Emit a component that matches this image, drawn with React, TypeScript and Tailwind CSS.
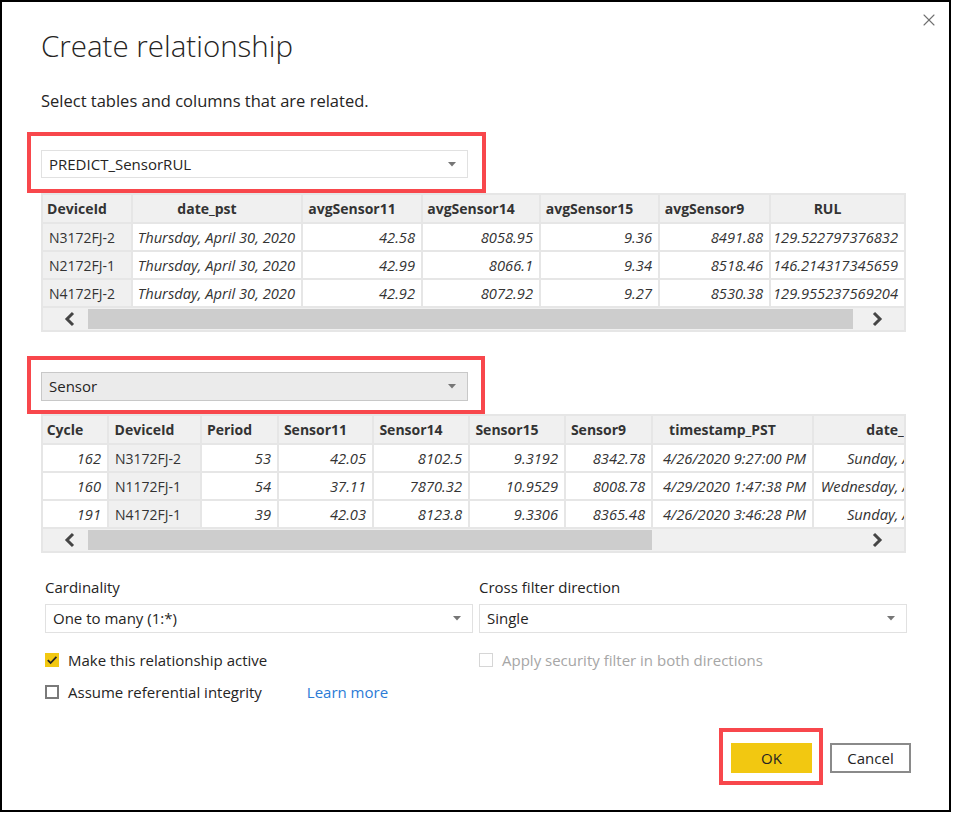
import React from 'react';
import { X } from 'lucide-react';

const headCell = 'bg-[#f0f0f0] h-[27px] flex items-center justify-center pr-5 font-bold text-[14px] text-[#333] whitespace-nowrap overflow-hidden';
const keyCell = 'bg-[#f0f0f0] h-[26px] flex items-center pl-[6px] text-[14px] text-[#333] whitespace-nowrap overflow-hidden';
const valCell = 'bg-white h-[26px] flex items-center justify-end pr-[6px] italic text-[14.7px] text-[#333] whitespace-nowrap overflow-hidden';

const t1Head = ['DeviceId', 'date_pst', 'avgSensor11', 'avgSensor14', 'avgSensor15', 'avgSensor9', 'RUL'];
const t1Rows = [
  ['N3172FJ-2', 'Thursday, April 30, 2020', '42.58', '8058.95', '9.36', '8491.88', '129.522797376832'],
  ['N2172FJ-1', 'Thursday, April 30, 2020', '42.99', '8066.1', '9.34', '8518.46', '146.214317345659'],
  ['N4172FJ-2', 'Thursday, April 30, 2020', '42.92', '8072.92', '9.27', '8530.38', '129.955237569204'],
];

const t2Head = ['Cycle', 'DeviceId', 'Period', 'Sensor11', 'Sensor14', 'Sensor15', 'Sensor9', 'timestamp_PST', 'date_pst'];
const t2Rows = [
  ['162', 'N3172FJ-2', '53', '42.05', '8102.5', '9.3192', '8342.78', '4/26/2020 9:27:00 PM', 'Sunday, April 26, 2020'],
  ['160', 'N1172FJ-1', '54', '37.11', '7870.32', '10.9529', '8008.78', '4/29/2020 1:47:38 PM', 'Wednesday, April 29, 2020'],
  ['191', 'N4172FJ-1', '39', '42.03', '8123.8', '9.3306', '8365.48', '4/26/2020 3:46:28 PM', 'Sunday, April 26, 2020'],
];

const Caret = () => (
  <svg width="8" height="5" viewBox="0 0 8 5" className="shrink-0">
    <polygon points="0,0 8,0 4,4.5" fill="#767676" />
  </svg>
);

const Chevron: React.FC<{ dir: 'left' | 'right' }> = ({ dir }) => (
  <svg width="12" height="16" viewBox="0 0 12 16">
    <polyline
      points={dir === 'left' ? '9,2 3,8 9,14' : '3,2 9,8 3,14'}
      fill="none"
      stroke="#454545"
      strokeWidth="3"
    />
  </svg>
);

const ScrollBar: React.FC<{ thumb: string }> = ({ thumb }) => (
  <div className="h-[22px] flex items-center bg-[#f0f0f0]">
    <div className="w-[45px] flex justify-center pl-[8px]">
      <Chevron dir="left" />
    </div>
    <div className="w-[765px] h-[20px] flex">
      <div className={`${thumb} h-full bg-[#cdcdcd]`} />
    </div>
    <div className="w-[51px] flex justify-center pr-[4px]">
      <Chevron dir="right" />
    </div>
  </div>
);

const DataTable: React.FC<{
  head: string[];
  rows: string[][];
  cols: string;
  gridW: string;
  keyIdx: number;
  thumb: string;
}> = ({ head, rows, cols, gridW, keyIdx, thumb }) => (
  <div className="w-[865px] border-2 border-[#e6e6e6] bg-[#e6e6e6] overflow-hidden">
    <div className={`grid ${cols} ${gridW} gap-[2px] bg-[#e6e6e6] pb-[2px]`}>
      {head.map((h) => (
        <div key={h} className={headCell}>{h}</div>
      ))}
      {rows.map((r, ri) =>
        r.map((c, ci) => (
          <div key={`${ri}-${ci}`} className={ci === keyIdx ? keyCell : valCell}>
            {c}
          </div>
        ))
      )}
    </div>
    <ScrollBar thumb={thumb} />
  </div>
);

const App: React.FC = () => {
  return (
    <div className="w-[953px] h-[813px] bg-white font-['Open_Sans',sans-serif] text-[#252423]">
      <div className="relative w-[951px] h-[812px] border-2 border-black flex flex-col pl-[39px] pr-[38px]">
        <button className="absolute top-[8px] right-[10px] text-[#707070]">
          <X size={20} strokeWidth={1.3} />
        </button>

        <h1 className="mt-[22px] h-[44px] text-[29.5px] leading-[44px] font-light">Create relationship</h1>
        <p className="mt-[21px] h-[24px] text-[16.5px] leading-[24px]">Select tables and columns that are related.</p>

        <div className="mt-[19px] -ml-[14px] w-[459px] h-[61px] border-4 border-[#f8474c] pt-[14px] pl-[10px]">
          <div className="w-[427px] h-[28px] border border-[#e1e1e1] bg-white flex items-center justify-between pl-[7px] pr-[11px] text-[15px]">
            <span>PREDICT_SensorRUL</span>
            <Caret />
          </div>
        </div>

        <DataTable
          head={t1Head}
          rows={t1Rows}
          cols="grid-cols-[88px_168px_118px_116px_117px_109px_133px]"
          gridW="w-[861px]"
          keyIdx={0}
          thumb="w-full"
        />

        <div className="mt-[24px] -ml-[14px] w-[458px] h-[58px] border-4 border-[#f8474c] pt-[12px] pl-[10px]">
          <div className="w-[427px] h-[29px] border border-[#c8c8c8] bg-[#ebebeb] flex items-center justify-between pl-[7px] pr-[11px] text-[15px]">
            <span>Sensor</span>
            <Caret />
          </div>
        </div>

        <DataTable
          head={t2Head}
          rows={t2Rows}
          cols="grid-cols-[64px_91px_75px_93px_94px_94px_85px_159px_184px]"
          gridW="w-[955px]"
          keyIdx={1}
          thumb="w-[564px]"
        />

        <div className="mt-[24px] pl-[4px] grid grid-cols-[428px_428px] gap-x-[6px] text-[15px]">
          <div className="flex flex-col">
            <label className="h-[20px] leading-[20px]">Cardinality</label>
            <div className="mt-[7px] h-[29px] border border-[#e1e1e1] bg-white flex items-center justify-between pl-[7px] pr-[11px]">
              <span>One to many (1:*)</span>
              <Caret />
            </div>
            <div className="mt-[17px] h-[20px] flex items-center gap-[9px]">
              <span className="w-[14px] h-[14px] bg-[#f2c811] flex items-center justify-center">
                <svg width="12" height="12" viewBox="0 0 12 12">
                  <polyline points="1.8,6.2 4.6,9 10.4,2.8" fill="none" stroke="#252423" strokeWidth="1.8" />
                </svg>
              </span>
              <span>Make this relationship active</span>
            </div>
            <div className="mt-[12px] h-[20px] flex items-center">
              <span className="w-[14px] h-[14px] border-2 border-[#7a7a7a] bg-white" />
              <span className="ml-[9px]">Assume referential integrity</span>
              <a className="ml-[45px] text-[#2b7bd6]">Learn more</a>
            </div>
          </div>
          <div className="flex flex-col">
            <label className="h-[20px] leading-[20px]">Cross filter direction</label>
            <div className="mt-[7px] h-[29px] border border-[#e1e1e1] bg-white flex items-center justify-between pl-[7px] pr-[11px]">
              <span>Single</span>
              <Caret />
            </div>
            <div className="mt-[17px] h-[20px] flex items-center gap-[9px] text-[#a6a6a6]">
              <span className="w-[14px] h-[14px] border border-[#d6d6d6] bg-white" />
              <span>Apply security filter in both directions</span>
            </div>
          </div>
        </div>

        <div className="mt-[26px] flex justify-end items-start gap-[7px]">
          <div className="w-[104px] h-[57px] border-4 border-[#f8474c] pt-[11px] pl-[8px]">
            <button className="w-[81px] h-[30px] bg-[#f2c811] text-[15px]">OK</button>
          </div>
          <button className="mt-[15px] w-[81px] h-[30px] border-2 border-[#8a8a8a] bg-white text-[15px]">Cancel</button>
        </div>
      </div>
    </div>
  );
};

export default App;
